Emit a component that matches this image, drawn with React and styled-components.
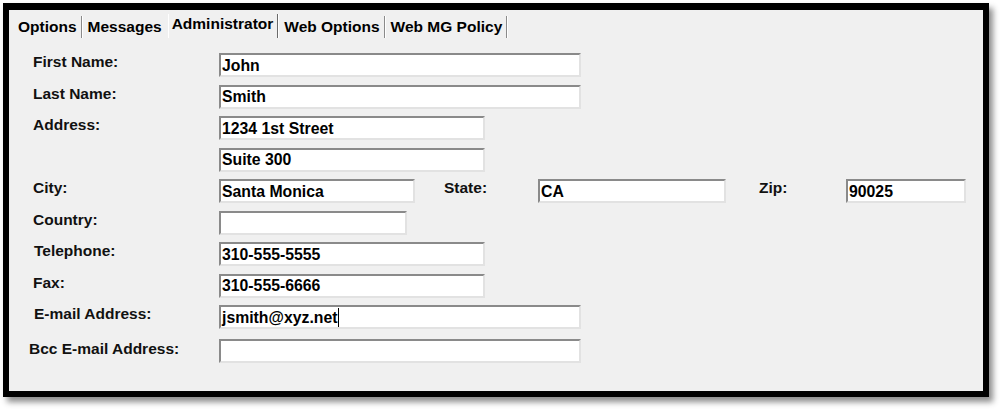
import styled, { createGlobalStyle } from 'styled-components';

const GlobalStyle = createGlobalStyle`
  html, body {
    margin: 0;
    padding: 0;
    background: #ffffff;
  }
  body {
    font-family: "Liberation Sans", Arial, sans-serif;
  }
`;

const tabs = ['Options', 'Messages', 'Administrator', 'Web Options', 'Web MG Policy'];
const ACTIVE = 2;

const App = () => {
    return <Page>
        <GlobalStyle />
        <Frame>
            <TabBar>
                {tabs.map((t, i) => (
                    <Tab key={t} active={i === ACTIVE} beforeActive={i === ACTIVE - 1}>{t}</Tab>
                ))}
            </TabBar>
            <Form>
                <Row>
                    <Label>First Name:</Label>
                    <Field width={362}>John</Field>
                </Row>
                <Row>
                    <Label>Last Name:</Label>
                    <Field width={362}>Smith</Field>
                </Row>
                <Row>
                    <Label>Address:</Label>
                    <Field width={266}>1234 1st Street</Field>
                </Row>
                <Row>
                    <Label />
                    <Field width={266}>Suite 300</Field>
                </Row>
                <Row>
                    <Label>City:</Label>
                    <Field width={196}>Santa Monica</Field>
                    <SideLabel gap={29} width={94}>State:</SideLabel>
                    <Field width={188}>CA</Field>
                    <SideLabel gap={33} width={87}>Zip:</SideLabel>
                    <Field width={120}>90025</Field>
                </Row>
                <Row>
                    <Label>Country:</Label>
                    <Field width={188}></Field>
                </Row>
                <Row>
                    <Label shift={1}>Telephone:</Label>
                    <Field width={266}>310-555-5555</Field>
                </Row>
                <Row>
                    <Label>Fax:</Label>
                    <Field width={266}>310-555-6666</Field>
                </Row>
                <Row>
                    <Label shift={1}>E-mail Address:</Label>
                    <Field width={362}>jsmith@xyz.net<Caret /></Field>
                </Row>
                <Row tall>
                    <Label shift={-4} low>Bcc E-mail Address:</Label>
                    <Field width={362}></Field>
                </Row>
            </Form>
        </Frame>
    </Page>
}

export default App;

const Page = styled.div`
    width: 1002px;
    height: 410px;
    padding: 3px 0 0 3px;
    box-sizing: border-box;
`

const Frame = styled.div`
    width: 986px;
    height: 394px;
    box-sizing: border-box;
    border: 6px solid #000;
    border-top-width: 7px;
    background: #f0f0f0;
    box-shadow: 4px 5px 6px rgba(0, 0, 0, 0.45);
`

const TabBar = styled.div`
    display: flex;
    align-items: stretch;
    height: 22px;
    margin: 6px 0 0 4px;
`

const Tab = styled.div`
    display: flex;
    align-items: center;
    padding: 0 4px 0 5px;
    font-size: 15.5px;
    font-weight: bold;
    color: #000;
    white-space: nowrap;
    border-right: ${props => props.beforeActive ? '1px solid transparent' : '1px solid #8a8a8a'};
    box-shadow: ${props => props.beforeActive ? 'none' : '1px 0 0 #ffffff'};
    margin-right: 1px;
    ${props => props.active && `
        border-left: 1px solid #ffffff;
        border-right: 1px solid #6a6a6a;
        margin-top: -2px;
        padding-bottom: 4px;
        padding-left: 3px;
        background: #f0f0f0;
    `}
`

const Form = styled.div`
    display: flex;
    flex-direction: column;
    gap: 7.5px;
    margin: 15px 0 0 24px;
`

const Row = styled.div`
    display: flex;
    align-items: flex-start;
    height: 24px;
    margin-top: ${props => props.tall ? '2px' : '0'};
`

const Label = styled.div`
    width: 186px;
    flex-shrink: 0;
    margin-left: ${props => props.shift || 0}px;
    margin-right: ${props => -(props.shift || 0)}px;
    padding-top: ${props => props.low ? '1px' : '0'};
    line-height: 18px;
    font-size: 15.5px;
    font-weight: bold;
    color: #111;
    white-space: nowrap;
`

const SideLabel = styled(Label)`
    width: ${props => props.width}px;
    margin-left: ${props => props.gap}px;
    margin-right: 0;
`

const Field = styled.div`
    width: ${props => props.width}px;
    height: 24px;
    box-sizing: border-box;
    flex-shrink: 0;
    display: flex;
    align-items: center;
    padding: 1px 0 0 1px;
    border: 2px solid;
    border-color: #8a8a8a #e2e2e2 #e2e2e2 #8a8a8a;
    background: #ffffff;
    font-size: 15.8px;
    font-weight: bold;
    color: #000;
    white-space: nowrap;
    overflow: hidden;
`

const Caret = styled.span`
    display: inline-block;
    width: 1px;
    height: 19px;
    margin-left: 1px;
    background: #000;
`
